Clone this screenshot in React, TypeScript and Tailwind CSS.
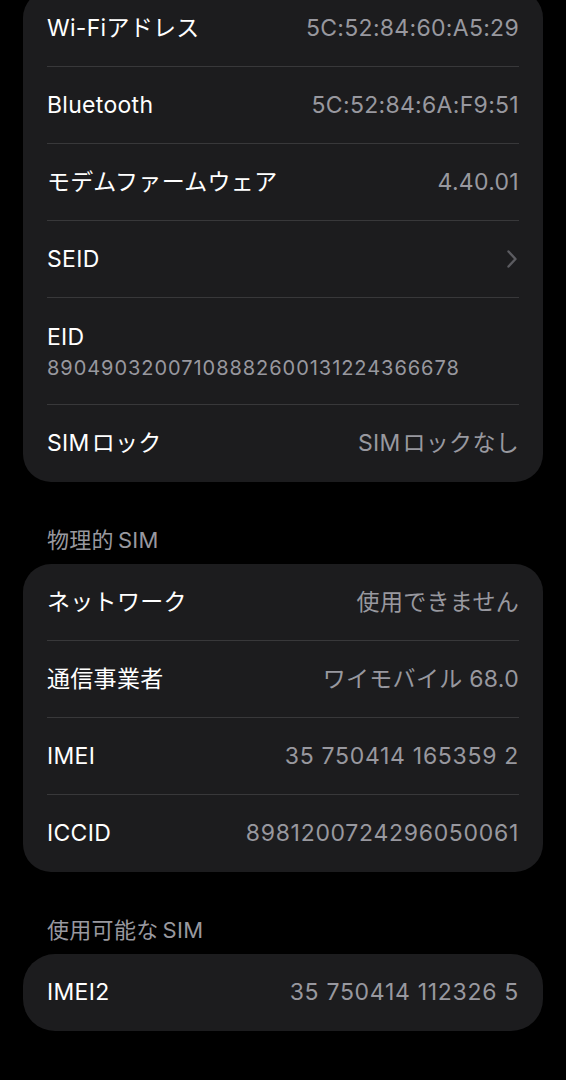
import React from "react";

const font = { fontFamily: 'Inter, "Noto Sans CJK JP", sans-serif' };

function Row({ label, value, chevron, last, num }: { label: React.ReactNode; value?: React.ReactNode; chevron?: boolean; last?: boolean; num?: boolean }) {
  return (
    <div className={`flex h-[77px] items-center justify-between ${last ? "" : "border-b border-[#38383a]"}`}>
      <span className="text-[23px] tracking-[0.3px] text-white">{label}</span>
      {value && (
        <span className={`text-[23px] text-[#98989f] ${num ? "tracking-[0.7px]" : "tracking-[0.3px]"}`}>{value}</span>
      )}
      {chevron && (
        <svg width="12" height="20" viewBox="0 0 12 20" className="mr-[1px]">
          <path d="M2.5 2.5 L9.5 10 L2.5 17.5" fill="none" stroke="#5b5b60" strokeWidth="2.4" strokeLinecap="round" strokeLinejoin="round" />
        </svg>
      )}
    </div>
  );
}

export default function App() {
  return (
    <div className="min-h-[1080px] w-[566px] overflow-hidden bg-black px-[23px]" style={font}>
      <div className="-mt-[10px] rounded-[28px] bg-[#1c1c1e] px-6">
        <Row label="Wi-Fiアドレス" value="5C:52:84:60:A5:29" />
        <Row label="Bluetooth" value="5C:52:84:6A:F9:51" />
        <Row label="モデムファームウェア" value="4.40.01" />
        <Row label="SEID" chevron />
        <div className="flex h-[107px] flex-col justify-center border-b border-[#38383a]">
          <span className="text-[23px] leading-[30px] tracking-[0.3px] text-white">EID</span>
          <span className="mt-[3px] text-[20px] leading-[26px] tracking-[0.95px] text-[#98989f]">89049032007108882600131224366678</span>
        </div>
        <Row
          label={<><span className="mr-[2px]">SIM</span>ロック</>}
          value={<><span className="mr-[2px]">SIM</span>ロックなし</>}
          last
        />
      </div>

      <div className="mt-[46px] px-6 text-[22px] leading-[24px] tracking-[0.3px] text-[#98989f]">
        物理的<span className="ml-[4px]">SIM</span>
      </div>
      <div className="mt-[12px] rounded-[28px] bg-[#1c1c1e] px-6">
        <Row label="ネットワーク" value="使用できません" />
        <Row label="通信事業者" value="ワイモバイル 68.0" />
        <Row label="IMEI" value="35 750414 165359 2" num />
        <Row label="ICCID" value="8981200724296050061" num last />
      </div>

      <div className="mt-[46px] px-6 text-[22px] leading-[24px] tracking-[0.3px] text-[#98989f]">
        使用可能な<span className="ml-[4px]">SIM</span>
      </div>
      <div className="mt-[12px] rounded-[32px] bg-[#1c1c1e] px-6">
        <Row label="IMEI2" value="35 750414 112326 5" num last />
      </div>
    </div>
  );
}
